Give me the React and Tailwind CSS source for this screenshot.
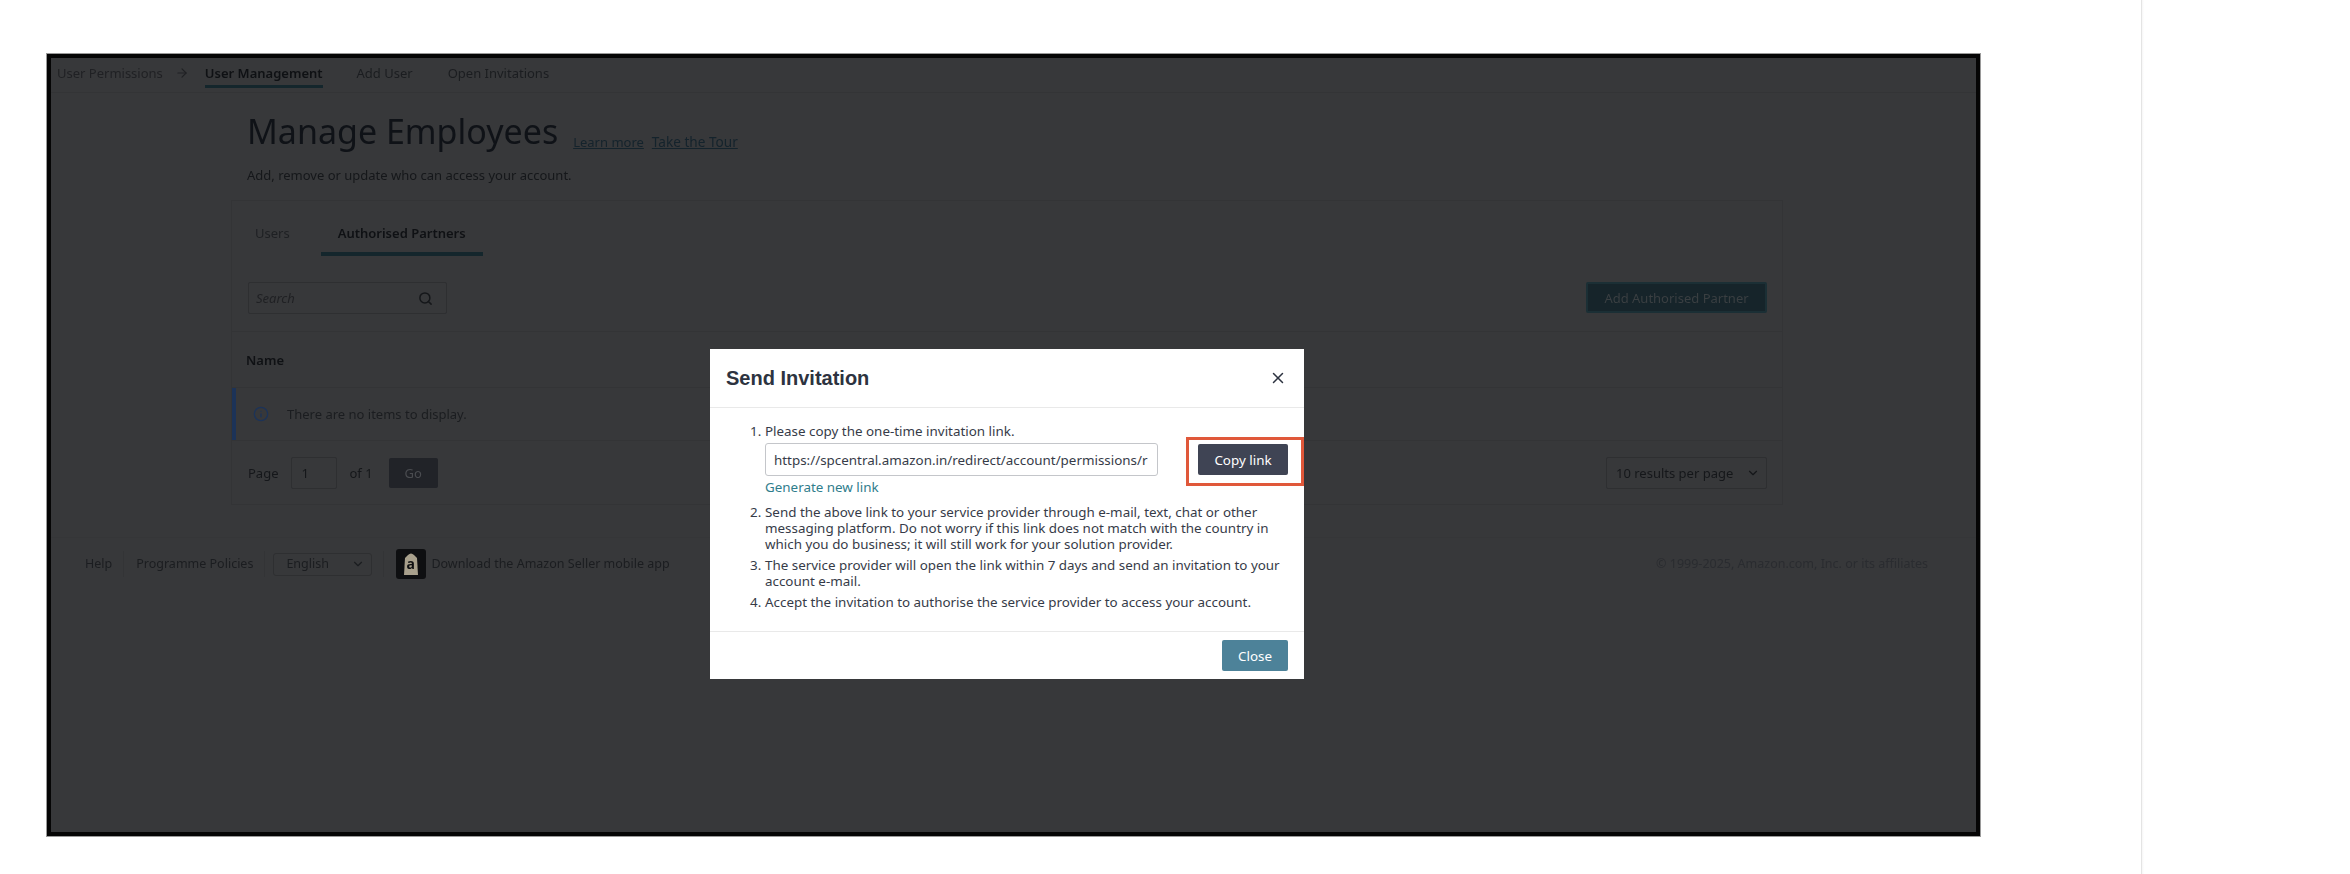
import React from 'react';
import { ArrowRight, ChevronDown, Info, Search, X } from 'lucide-react';

const Divider = () => <div className="w-px h-[26px] bg-[#333436]"></div>;

const AppBadge = () => (
  <div className="relative w-[30px] h-[30px] bg-[#0e0f11] rounded-[3px] flex items-center justify-center">
    <svg width="16" height="24" viewBox="0 0 16 24">
      <path d="M2 6 L5 3 Q8 0 11 3 L14 6 L15 23 L1 23 Z" fill="#a8a08c" />
    </svg>
    <span className="absolute top-[7px] left-[10px] text-[14px] leading-[16px] font-bold text-[#0e0f11]">a</span>
  </div>
);

const InviteModal = () => (
  <div className="absolute left-[659px] top-[291px] w-[594px] h-[330px] bg-white flex flex-col text-[13.4px] leading-[16px] text-[#363b48] font-['Noto_Sans',sans-serif]">
    <div className="h-[59px] shrink-0 flex items-center justify-between pl-[16px] pr-[17px] border-b border-[#e9e9e9]">
      <h2 className="text-[20px] font-bold text-[#2d3340] font-['Liberation_Sans',sans-serif]">Send Invitation</h2>
      <X size={18} strokeWidth={2} className="text-[#2d3340]" />
    </div>
    <div className="relative flex-1 pt-[15px] pl-[40px] pr-[16px]">
      <ol className="flex flex-col">
        <li className="flex">
          <span className="w-[15px] shrink-0">1.</span>
          <span>Please copy the one-time invitation link.</span>
        </li>
        <li className="pl-[15px] mt-[4px] flex items-start">
          <div className="w-[393px] h-[33px] border border-[#c4c6ca] rounded-[3px] pl-[8px] pr-[7px] flex items-center overflow-hidden whitespace-nowrap">
            https://spcentral.amazon.in/redirect/account/permissions/r
          </div>
          <button className="ml-[40px] w-[90px] h-[31px] mt-[1px] bg-[#3f4454] text-white rounded-[2px]">Copy link</button>
        </li>
        <li className="pl-[15px] mt-[3px] text-[#2f7d8c]">Generate new link</li>
        <li className="flex mt-[9px]">
          <span className="w-[15px] shrink-0">2.</span>
          <span>Send the above link to your service provider through e-mail, text, chat or other messaging platform. Do not worry if this link does not match with the country in which you do business; it will still work for your solution provider.</span>
        </li>
        <li className="flex mt-[5px]">
          <span className="w-[15px] shrink-0">3.</span>
          <span>The service provider will open the link within 7 days and send an invitation to your account e-mail.</span>
        </li>
        <li className="flex mt-[5px]">
          <span className="w-[15px] shrink-0">4.</span>
          <span>Accept the invitation to authorise the service provider to access your account.</span>
        </li>
      </ol>
      <div className="absolute left-[476px] top-[29px] w-[118px] h-[49px] border-[3px] border-[#e0583a]"></div>
    </div>
    <div className="h-[48px] shrink-0 border-t border-[#e9e9e9] flex items-center justify-end pr-[16px]">
      <button className="w-[66px] h-[31px] bg-[#4d8299] text-white rounded-[2px]">Close</button>
    </div>
  </div>
);

export default function App() {
  return (
    <div className="flex w-full h-[874px] bg-white overflow-hidden">
      <main className="w-[2141px] shrink-0 pl-[47px] pt-[54px]">
        <div className="relative w-[1933px] h-[782px] border-[4px] border-[#050505] outline outline-1 outline-[#9a9a9a] bg-[#37383a] overflow-hidden">
          <div className="blur-[0.4px] text-[13px] leading-[16px] text-[#15171a] font-['Noto_Sans',sans-serif]">
            <nav className="h-[35px] border-b border-[#333436] flex items-start pt-[7px] pl-[6px]">
              <span className="text-[#202124]">User Permissions</span>
              <ArrowRight size={14} className="mt-[1px] ml-[12px] mr-[14px] text-[#202124]" />
              <span className="relative font-semibold ml-[2px] text-[#0f1114]">
                User Management
                <span className="absolute left-0 right-0 top-[20px] h-[3px] bg-[#14262c]"></span>
              </span>
              <span className="ml-[34px] text-[#1b1d20]">Add User</span>
              <span className="ml-[35px] text-[#1b1d20]">Open Invitations</span>
            </nav>

            <div className="pl-[196px] pt-[14px]">
              <div className="flex items-end">
                <h1 className="text-[34px] leading-[48px] text-[#0f1217]">Manage Employees</h1>
                <a className="ml-[15px] mb-[5px] underline text-[#14232c]">Learn more</a>
                <a className="ml-[8px] mb-[5px] underline text-[13.6px] text-[#14232c]">Take the Tour</a>
              </div>
              <p className="mt-[12px]">Add, remove or update who can access your account.</p>
            </div>

            <section className="ml-[180px] mt-[17px] w-[1552px] h-[305px] border border-[#333436]">
              <div className="h-[53px] flex pl-[23px]">
                <span className="pt-[24px] text-[#1e2023]">Users</span>
                <span className="ml-[31px] px-[17px] pt-[24px] h-[55px] font-semibold border-b-4 border-[#14262c] text-[#0f1114]">Authorised Partners</span>
              </div>
              <div className="h-[78px] flex items-start justify-between pl-[16px] pr-[15px] pt-[28px] border-b border-[#333436]">
                <div className="w-[199px] h-[32px] border border-[#2e2f31] rounded-[2px] flex items-center justify-between pl-[7px] pr-[13px]">
                  <span className="italic text-[#202124]">Search</span>
                  <Search size={15} strokeWidth={2.4} className="text-[#15171a]" />
                </div>
                <button className="w-[181px] h-[31px] bg-[#16242a] border-2 border-[#1b2f35] rounded-[2px] text-[#3a3f42]">Add Authorised Partner</button>
              </div>
              <div className="h-[56px] flex items-center pl-[14px] font-semibold text-[#0f1114] border-b border-[#333436]">Name</div>
              <div className="h-[52px] flex items-center border-l-4 border-[#1c3358] pl-[17px]">
                <Info size={16} className="text-[#1c3358]" />
                <span className="ml-[18px] text-[#1b1d20]">There are no items to display.</span>
              </div>
              <div className="flex items-center justify-between pl-[16px] pr-[15px] pt-[16px] border-t border-[#333436]">
                <div className="flex items-center">
                  <span>Page</span>
                  <div className="ml-[12px] w-[46px] h-[32px] border border-[#2e2f31] rounded-[2px] flex items-center pl-[10px]">1</div>
                  <span className="ml-[13px]">of 1</span>
                  <button className="ml-[16px] w-[49px] h-[30px] bg-[#212328] rounded-[2px] text-[#4a4c50]">Go</button>
                </div>
                <div className="w-[161px] h-[32px] border border-[#2e2f31] rounded-[2px] flex items-center justify-between pl-[9px] pr-[6px]">
                  <span>10 results per page</span>
                  <ChevronDown size={14} />
                </div>
              </div>
            </section>

            <footer className="mt-[32px] border-t border-[#353638] pt-[11px] pl-[34px] pr-[48px] flex items-center justify-between text-[12.5px]">
              <div className="flex items-center text-[#1b1d20]">
                <span>Help</span>
                <span className="ml-[11px]"><Divider /></span>
                <span className="ml-[12px]">Programme Policies</span>
                <span className="ml-[11px]"><Divider /></span>
                <div className="ml-[8px] w-[99px] h-[23px] border border-[#2e2f31] rounded-[3px] flex items-center justify-between pl-[12px] pr-[6px]">
                  <span>English</span>
                  <ChevronDown size={14} />
                </div>
                <span className="ml-[11px]"><Divider /></span>
                <span className="ml-[12px]"><AppBadge /></span>
                <span className="ml-[5px]">Download the Amazon Seller mobile app</span>
              </div>
              <span className="text-[#2a2c30]">© 1999-2025, Amazon.com, Inc. or its affiliates</span>
            </footer>
          </div>

          <InviteModal />
        </div>
      </main>
      <aside className="flex-1 border-l border-[#e4e4e4] bg-gradient-to-r from-[#f6f6f6] to-white to-[1%]"></aside>
    </div>
  );
}
